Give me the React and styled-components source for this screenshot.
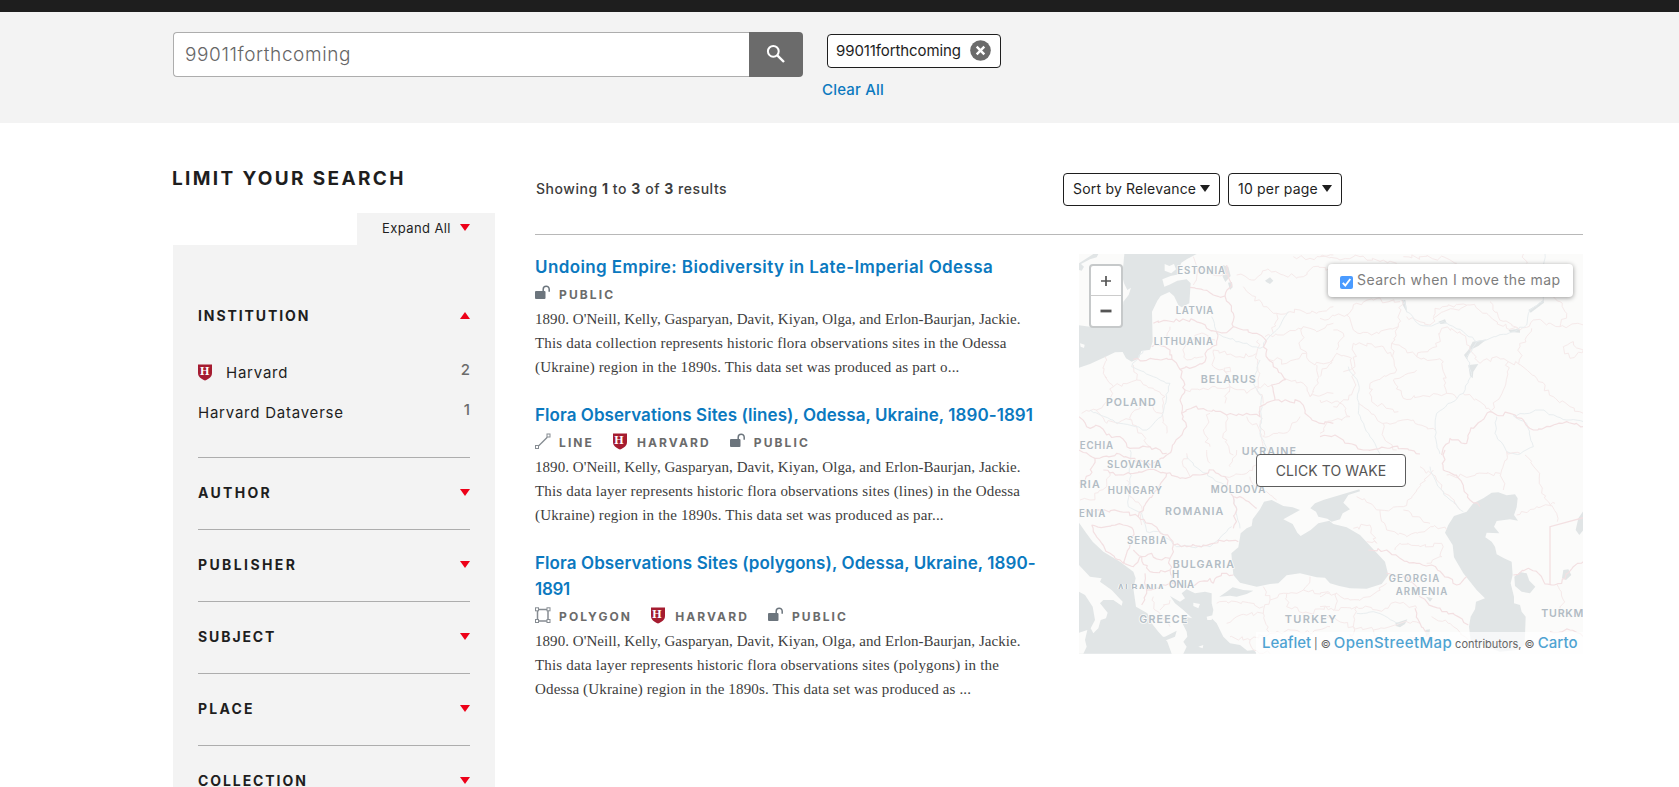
import React from 'react';
import styled, { createGlobalStyle } from 'styled-components';

const SANS = 'Inter, "Liberation Sans", sans-serif';
const SERIF = '"Liberation Serif", serif';

const GlobalStyle = createGlobalStyle`
  * { box-sizing: border-box; }
  body { margin: 0; background: #fff; font-family: ${SANS}; color: #1e1e1e; overflow: hidden; }
  a { text-decoration: none; color: #0b79bf; }
`;

const Page = styled.div`height: 787px; overflow: hidden;`;
const TopBar = styled.div`height: 12px; background: #1e1e1e;`;

/* Search header */
const Header = styled.header`
  display: flex;
  align-items: flex-start;
  gap: 20px;
  height: 111px;
  padding: 20px 0 0 173px;
  background: #f3f3f3;
`;
const SearchForm = styled.div`display: flex; width: 630px; height: 45px;`;
const SearchField = styled.div`
  flex: 1;
  border: 1px solid #adadad;
  border-right: 0;
  border-radius: 4px 0 0 4px;
  background: #fff;
  padding-left: 11px;
  font-size: 19px;
  font-weight: 300;
  line-height: 43px;
  letter-spacing: 0.6px;
  color: #666;
`;
const SearchButton = styled.button`
  display: flex;
  align-items: center;
  justify-content: center;
  width: 54px;
  padding: 0 0 2px;
  border: 0;
  border-radius: 0 4px 4px 0;
  background: #6b6b6b;
`;
const Filters = styled.div`display: flex; flex-direction: column; align-items: flex-start; gap: 12px; padding-top: 2px;`;
const Chip = styled.div`
  display: flex;
  align-items: center;
  justify-content: space-between;
  width: 174px;
  height: 34px;
  margin-left: 4px;
  padding: 0 9px 2px 8px;
  border: 1px solid #1e1e1e;
  border-radius: 4px;
  background: #fff;
  font-size: 15px;
  letter-spacing: -0.1px;
`;
const ClearLink = styled.a`margin-left: -1px; font-size: 15px; font-weight: 500; line-height: 20px; letter-spacing: 0.2px;`;

/* Columns */
const Main = styled.main`display: flex; gap: 40px; padding-left: 173px;`;
const Sidebar = styled.aside`display: flex; flex-direction: column; width: 322px; padding-top: 44px;`;
const SidebarTitle = styled.h2`
  margin: 0 0 22px -1px;
  font-size: 19px;
  font-weight: 700;
  line-height: 24px;
  letter-spacing: 2.35px;
`;
const ExpandAll = styled.button`
  display: flex;
  align-items: center;
  justify-content: space-between;
  align-self: flex-end;
  width: 138px;
  height: 32px;
  padding: 0 25px 2px;
  border: 0;
  background: #f3f3f3;
  font: 400 13px ${SANS};
  letter-spacing: 0.4px;
  color: #1e1e1e;
`;
const FacetPanel = styled.div`height: 560px; padding: 36px 25px 0; background: #f3f3f3;`;
const Facet = styled.section`padding: 25px 0 26px; border-bottom: 1px solid #adadad;`;
const FacetHeading = styled.h3`
  display: flex;
  align-items: center;
  justify-content: space-between;
  height: 20px;
  margin: 0;
  font-size: 14px;
  font-weight: 700;
  line-height: 20px;
  letter-spacing: ${(p) => p.$track}px;
`;
const Triangle = styled.i`
  margin-bottom: 1px;
  border: 5px solid transparent;
  ${(p) => (p.$up
    ? 'border-top: 0; border-bottom: 7px solid #ed0018;'
    : 'border-bottom: 0; border-top: 7px solid #ed0018;')}
`;
const FacetValues = styled.ul`
  display: flex;
  flex-direction: column;
  gap: 20px;
  margin: 0;
  padding: 37px 0 8px;
  list-style: none;
`;
const FacetValue = styled.li`
  display: flex;
  align-items: center;
  height: 20px;
  font-size: 15px;
  line-height: 20px;
  letter-spacing: 0.77px;
  svg { margin: 0 14px 2px 0; }
`;
const Count = styled.span`margin-left: auto; padding-bottom: 6px; font-weight: 500; letter-spacing: 0; color: #6b6b6b;`;

/* Results */
const Content = styled.div`width: 1048px;`;
const Toolbar = styled.div`
  display: flex;
  align-items: flex-start;
  gap: 8px;
  height: 112px;
  padding-top: 50px;
  border-bottom: 1px solid #b8b8b8;
  font-size: 14px;
`;
const Showing = styled.div`
  width: 520px;
  padding-left: 1px;
  font-weight: 500;
  line-height: 31px;
  letter-spacing: 0.54px;
  color: #3d3d3d;
  b { font-weight: 700; }
`;
const Select = styled.button`
  display: flex;
  align-items: center;
  justify-content: space-between;
  width: ${(p) => p.$width}px;
  height: 33px;
  padding: 0 9px 2px;
  border: 1px solid #1e1e1e;
  border-radius: 4px;
  background: #fff;
  font: 400 14px ${SANS};
  letter-spacing: 0.2px;
  color: #1e1e1e;
`;
const Caret = styled.i`border: 5px solid transparent; border-top: 7px solid #1e1e1e; border-bottom: 0;`;
const Body = styled.div`display: flex; justify-content: space-between; padding-top: 19px;`;
const Results = styled.div`display: flex; flex-direction: column; gap: 23px; width: 510px;`;
const Title = styled.h3`margin: 0; font-size: 17px; font-weight: 600; line-height: 26px;`;
const TitleLine = styled.a`display: block; white-space: nowrap; letter-spacing: ${(p) => p.$track}px;`;
const Meta = styled.div`display: flex; gap: 19px; height: 27px; padding-top: 5px;`;
const MetaItem = styled.span`
  display: flex;
  font-size: 12px;
  font-weight: 700;
  line-height: 19px;
  letter-spacing: 2.1px;
  color: #6b6b6b;
  svg { margin-right: ${(p) => p.$gap || 8}px; }
`;
const Label = styled.span`display: block;`;
const Abstract = styled.p`margin: 0; font: 15px/24px ${SERIF}; color: #3d3d3d;`;
const Line = styled.span`display: block; white-space: nowrap; letter-spacing: ${(p) => p.$track}px;`;

/* Map */
const MapBox = styled.div`position: relative; width: 504px; height: 400px; overflow: hidden; background: #fbfbfa;`;
const MapSvg = styled.svg`display: block; width: 504px; height: 400px;`;
const ZoomControl = styled.div`
  position: absolute;
  top: 10px;
  left: 10px;
  width: 34px;
  border: 2px solid #c6c9ca;
  border-radius: 4px;
  background: #fff;
`;
const ZoomButton = styled.div`
  display: flex;
  align-items: center;
  justify-content: center;
  height: 29px;
  & + & { height: 31px; padding-bottom: 1px; border-top: 1px solid #ccc; }
`;
const MoveToggle = styled.label`
  position: absolute;
  top: 10px;
  right: 10px;
  display: flex;
  align-items: center;
  width: 245px;
  height: 33px;
  padding: 0 0 2px 12px;
  border-radius: 4px;
  background: #fff;
  box-shadow: 0 1px 5px rgba(0, 0, 0, 0.4);
  font-size: 14px;
  letter-spacing: 0.45px;
  color: #7d7d7d;
`;
const CheckMark = styled.svg`margin: 6px 4px 0 0; flex: none;`;
const Wake = styled.div`
  position: absolute;
  top: 200px;
  left: 177px;
  width: 150px;
  height: 33px;
  border: 1px solid #5c5c5c;
  border-radius: 4px;
  background: #fff;
  font-size: 14px;
  line-height: 31px;
  letter-spacing: 0.1px;
  text-align: center;
  color: #555;
`;
const Attribution = styled.div`
  position: absolute;
  right: 0;
  bottom: 0;
  display: flex;
  align-items: baseline;
  gap: 3px;
  width: 327px;
  height: 22px;
  padding-left: 6px;
  background: rgba(255, 255, 255, 0.7);
  font-size: 11px;
  line-height: 22px;
  white-space: nowrap;
  color: #666;
`;
const Credit = styled.a`
  font-size: 15px;
  font-weight: 500;
  letter-spacing: ${(p) => p.$track}px;
  color: #4fa3d2;
`;

function Shield() {
  return (
    <svg width="14" height="17" viewBox="0 0 14 17">
      <path d="M0 .5h14v8.500c0 4-3.500 6-7 7.500C3.500 15 0 13 0 9z" fill="#a51c30" />
      <text x="7" y="11" textAnchor="middle" fontFamily="Liberation Serif, serif" fontWeight="700" fontSize="12" fill="#fff">H</text>
    </svg>
  );
}
function Lock() {
  return (
    <svg width="16" height="16" viewBox="0 0 16 16">
      <rect x="0" y="6" width="10.500" height="8" rx="1" fill="#6c757d" />
      <path d="M8.200 6.500V4.200a3 3 0 0 1 6 0V6.800" fill="none" stroke="#6c757d" strokeWidth="1.500" />
    </svg>
  );
}
function LineIcon() {
  return (
    <svg width="16" height="17" viewBox="0 0 16 17" fill="none" stroke="#868c92">
      <path d="M3.500 13L12.300 4.200" strokeWidth="1.300" />
      <rect x=".5" y="12.500" width="3" height="3" />
      <rect x="12" y="1" width="3" height="3" />
    </svg>
  );
}
function PolygonIcon() {
  return (
    <svg width="16" height="17" viewBox="0 0 16 17" fill="#fff" stroke="#868c92">
      <path d="M2.500 2.500h10.500v11.500H2.500z" strokeWidth="1.500" />
      <rect x=".5" y=".8" width="3" height="3" />
      <rect x="12" y=".8" width="3" height="3" />
      <rect x=".5" y="12.500" width="3" height="3" />
      <rect x="12" y="12.500" width="3" height="3" />
    </svg>
  );
}

const META = {
  line: { label: 'LINE', icon: <LineIcon /> },
  polygon: { label: 'POLYGON', icon: <PolygonIcon /> },
  harvard: { label: 'HARVARD', icon: <Shield />, gap: 10 },
  public: { label: 'PUBLIC', icon: <Lock /> },
};

const CITATION = ["1890. O'Neill, Kelly, Gasparyan, Davit, Kiyan, Olga, and Erlon-Baurjan, Jackie.", 0.05];
const RESULTS = [
  {
    title: [['Undoing Empire: Biodiversity in Late-Imperial Odessa', 0.4]],
    meta: ['public'],
    text: [
      CITATION,
      ['This data collection represents historic flora observations sites in the Odessa', 0.17],
      ['(Ukraine) region in the 1890s. This data set was produced as part o...', 0.165],
    ],
  },
  {
    title: [['Flora Observations Sites (lines), Odessa, Ukraine, 1890-1891', 0.06]],
    meta: ['line', 'harvard', 'public'],
    text: [
      CITATION,
      ['This data layer represents historic flora observations sites (lines) in the Odessa', 0.171],
      ['(Ukraine) region in the 1890s. This data set was produced as par...', 0.18],
    ],
  },
  {
    title: [['Flora Observations Sites (polygons), Odessa, Ukraine, 1890-', 0.09], ['1891', -0.3]],
    meta: ['polygon', 'harvard', 'public'],
    text: [
      CITATION,
      ['This data layer represents historic flora observations sites (polygons) in the', 0.17],
      ['Odessa (Ukraine) region in the 1890s. This data set was produced as ...', 0.15],
    ],
  },
];

const CLOSED_FACETS = [['AUTHOR', 2.3], ['PUBLISHER', 2.4], ['SUBJECT', 1.9], ['PLACE', 2.2], ['COLLECTION', 1.92]];

/* Turns a coarse list of points into an irregular boundary line. */
function rough(points, amount) {
  let seed = Math.round(points[0] * 7 + points[1] * 13 + points.length) || 1;
  const rnd = () => {
    seed = (seed * 16807) % 2147483647;
    return (seed % 1000) / 1000 - 0.5;
  };
  let d = `M${points[0]} ${points[1]}`;
  for (let i = 2; i < points.length; i += 2) {
    const [x0, y0, x1, y1] = [points[i - 2], points[i - 1], points[i], points[i + 1]];
    const n = Math.max(1, Math.round(Math.hypot(x1 - x0, y1 - y0) / 11));
    for (let k = 1; k < n; k += 1) {
      d += `L${(x0 + ((x1 - x0) * k) / n + rnd() * amount).toFixed(1)} ${(y0 + ((y1 - y0) * k) / n + rnd() * amount).toFixed(1)}`;
    }
    d += `L${x1} ${y1}`;
  }
  return d;
}

const NW = {
  borders: [
    [250, 220, 290, 212, 375, 212, 410, 235, 440, 245, 470, 248, 490, 230, 520, 240, 560, 250, 583, 265, 588, 310, 610, 350, 648, 388, 605, 405, 615, 450, 690, 455, 705, 490, 740, 515, 790, 520],
    [360, 112, 400, 120, 430, 135, 465, 138, 478, 160, 490, 190, 490, 230],
    [245, 290, 275, 288, 300, 300, 306, 328, 190, 328], [306, 328, 330, 358, 375, 350, 405, 335, 412, 300, 440, 285, 440, 245],
    [330, 358, 345, 420, 330, 450, 335, 490, 350, 530, 330, 560, 305, 600, 290, 615], [335, 490, 370, 472, 430, 480, 470, 495, 530, 490, 570, 500, 570, 470, 615, 450],
    [27, 500, 50, 530, 90, 530, 110, 555, 150, 560, 180, 595, 240, 590, 290, 610],
    [470, 45, 475, 75, 485, 105, 465, 138],
  ],
  minor: [
    [105, 320, 100, 370, 130, 410, 115, 450, 80, 480, 35, 490], [190, 345, 200, 390, 250, 415, 285, 440, 275, 490, 290, 550], [130, 410, 185, 395, 200, 390],
    [185, 490, 230, 460, 275, 490], [80, 480, 110, 520, 185, 510, 185, 490], [185, 510, 215, 550, 240, 590], [300, 230, 290, 260, 340, 280, 400, 250, 435, 270],
    [340, 280, 350, 330, 400, 320], [430, 300, 430, 350, 470, 370, 480, 410, 465, 460], [430, 300, 510, 320, 560, 310, 565, 270], [345, 420, 400, 415, 480, 410, 530, 430, 560, 410, 605, 405],
    [560, 310, 570, 370, 560, 420, 580, 460], [500, 75, 545, 90, 590, 60, 640, 75, 700, 80, 730, 50, 790, 60], [520, 110, 580, 170, 620, 190, 690, 180, 740, 190, 790, 170],
    [585, 260, 640, 255, 700, 230, 740, 245, 790, 220], [590, 320, 650, 340, 710, 310, 735, 345, 790, 330], [650, 388, 700, 400, 720, 440, 790, 430], [570, 500, 580, 560, 640, 550, 690, 500],
    [420, 490, 400, 540, 420, 590], [470, 495, 460, 550, 490, 615], [530, 500, 570, 545, 575, 610], [620, 190, 610, 250], [370, 20, 380, 55, 430, 75, 475, 75], [380, 55, 370, 105],
    [670, 20, 720, 25, 790, 15], [700, 230, 690, 290, 710, 310], [740, 345, 745, 400, 720, 440],
    [462, 355, 480, 352, 482, 365, 465, 366, 462, 355],
  ],
  rivers: [[425, 200, 440, 250, 520, 280, 570, 295, 620, 240, 655, 185], [570, 330, 550, 400, 575, 440, 570, 550, 600, 610], [220, 300, 185, 350, 250, 380, 300, 400, 275, 500, 230, 540, 150, 520, 60, 480]],
};
const NE = {
  borders: [[0, 560, 45, 555, 85, 580, 130, 600, 220, 590, 300, 612], [365, 615, 390, 565, 440, 580, 450, 545, 510, 485, 530, 495, 570, 490, 605, 505, 640, 540, 690, 530, 740, 515, 790, 530]],
  minor: [
    [0, 205, 80, 195, 110, 160, 160, 150, 240, 155], [80, 195, 100, 240, 155, 255, 235, 230, 245, 150], [235, 230, 215, 280, 230, 360, 150, 400, 155, 455, 235, 485],
    [100, 280, 190, 290, 215, 320], [100, 280, 105, 350, 70, 365], [0, 380, 50, 310, 95, 325, 105, 400, 85, 450, 40, 470], [40, 240, 70, 250, 50, 300], [260, 200, 330, 225, 370, 185, 450, 165, 500, 190, 560, 235, 600, 240],
    [215, 280, 290, 320, 350, 290, 365, 235, 420, 245, 450, 300], [290, 320, 370, 335, 380, 430, 300, 440, 250, 445, 220, 390, 290, 360], [450, 300, 480, 340, 530, 320, 565, 335, 600, 345, 650, 385, 700, 440, 750, 470, 790, 490],
    [565, 335, 550, 420, 515, 480], [430, 430, 480, 455, 515, 485], [510, 155, 535, 200, 600, 240, 640, 210, 720, 230, 790, 225], [600, 290, 635, 235], [600, 290, 600, 345], [730, 290, 750, 325, 790, 300, 760, 275, 730, 290],
    [0, 450, 60, 460, 90, 500, 20, 520, 0, 550], [115, 460, 190, 520, 195, 570, 230, 600], [190, 520, 280, 510, 345, 540], [380, 430, 410, 445], [0, 20, 60, 30, 120, 20, 230, 40], [250, 20, 380, 25, 410, 40], [610, 12, 620, 40], [700, 140, 740, 190, 720, 230], [340, 200, 345, 175, 440, 165],
  ],
  rivers: [
    [250, 150, 260, 185, 300, 225, 335, 228, 370, 215, 430, 245, 470, 275, 510, 265, 580, 245, 620, 225, 630, 180, 670, 155, 675, 12], [470, 275, 440, 320, 455, 370, 430, 430, 350, 490, 345, 560, 360, 612],
    [530, 500, 525, 550, 560, 605, 600, 612, 640, 590, 620, 520, 580, 497, 660, 480, 740, 510, 790, 515], [85, 350, 115, 400, 115, 490, 150, 560, 180, 612],
  ],
};
const SW = {
  borders: [
    [27, 0, 75, 25, 100, 20, 140, 10, 180, 25, 240, 45, 290, 15], [75, 25, 60, 75, 30, 100], [100, 60, 160, 75, 230, 60, 290, 70], [290, 70, 260, 120, 225, 165, 205, 200, 250, 225, 300, 265, 310, 285],
    [290, 70, 330, 85, 390, 75, 430, 60, 465, 80, 490, 140, 500, 180, 490, 235], [490, 140, 520, 145, 560, 175], [310, 285, 350, 290, 400, 285, 430, 280, 470, 270, 505, 275],
    [65, 225, 110, 230, 160, 225, 190, 240, 180, 285, 160, 340, 120, 310, 70, 245, 65, 225], [205, 200, 150, 185, 90, 180, 30, 190], [190, 300, 215, 320, 245, 310, 275, 330, 300, 325, 310, 285], [215, 320, 190, 350, 160, 335],
    [215, 320, 240, 365, 300, 360, 300, 325], [300, 360, 310, 400, 350, 410, 420, 385, 430, 400], [430, 400, 455, 370, 490, 375], [225, 370, 230, 430, 215, 465], [230, 420, 310, 400],
  ],
  minor: [
    [120, 70, 110, 110, 60, 150, 30, 150], [170, 90, 180, 140, 215, 170, 215, 225], [250, 440, 255, 480, 300, 530], [300, 450, 270, 480], [580, 0, 570, 40, 530, 70, 465, 80], [640, 30, 700, 60, 740, 40, 780, 50], [540, 80, 555, 110, 590, 125, 620, 150],
    [580, 410, 600, 450, 580, 490, 500, 500, 470, 520], [600, 450, 650, 430, 700, 420, 720, 380], [650, 430, 650, 470, 720, 490, 780, 470], [700, 420, 780, 430], [580, 490, 600, 550, 540, 570, 480, 560], [600, 550, 660, 540, 720, 550, 780, 530],
    [440, 460, 500, 455, 580, 470], [540, 570, 550, 600, 600, 611], [350, 10, 340, 50, 360, 80], [410, 0, 420, 40], [500, 0, 480, 50],
  ],
  rivers: [[180, 0, 180, 100, 175, 170, 215, 190, 230, 245, 270, 245, 320, 290, 420, 290, 470, 245, 485, 230], [350, 20, 390, 60, 480, 120, 500, 180, 510, 235]],
};
const SE = {
  borders: [
    [375, 0, 370, 60, 410, 75, 430, 110, 450, 150, 480, 170], [145, 300, 200, 300, 240, 325, 290, 340, 335, 345, 370, 375, 410, 405, 440, 380], [200, 370, 250, 380, 290, 410, 300, 440, 340, 470, 400, 490, 445, 525],
    [580, 375, 625, 355, 655, 370, 675, 402, 725, 400, 760, 350, 790, 335], [285, 475, 300, 520, 330, 560, 380, 600], [690, 545, 750, 540, 790, 560],
  ],
  minor: [
    [300, 50, 350, 90, 390, 140, 420, 180], [380, 75, 450, 80, 540, 70], [600, 10, 560, 5, 545, 60, 550, 120], [615, 15, 650, 60, 665, 130, 710, 190, 712, 215], [590, 195, 650, 170, 705, 160],
    [180, 180, 250, 170, 290, 120, 340, 60], [180, 180, 200, 240, 260, 260, 340, 230, 380, 240], [250, 180, 330, 220], [100, 235, 150, 225, 170, 280, 140, 275], [225, 300, 240, 280, 300, 290, 365, 280, 365, 320, 320, 340], [110, 140, 150, 160, 180, 180],
    [0, 440, 50, 430, 90, 450, 150, 440, 200, 400], [50, 430, 40, 480, 110, 470, 170, 480, 240, 460, 290, 475], [110, 470, 100, 530, 160, 540, 240, 520, 300, 520], [20, 500, 100, 530, 90, 590], [160, 540, 180, 590, 260, 570, 330, 560], [710, 402, 730, 450, 720, 500, 790, 490], [335, 500, 400, 530, 445, 570], [0, 470, 40, 480],
  ],
  rivers: [[330, 50, 350, 100, 380, 140, 430, 185], [110, 490, 160, 485, 240, 520]],
};
const QUADRANTS = [[NW, -27, -12], [NE, 723, -12], [SW, -27, 588], [SE, 723, 588]];

/* text, x, baseline, width, size in map units */
const LABELS = [
  ['ESTONIA', 295, 60, 143, 28], ['LATVIA', 290, 181, 113, 28], ['LITHUANIA', 224, 273, 178, 28], ['BELARUS', 365, 388, 165, 31], ['POLAND', 81, 456, 149, 31],
  ['ECHIA', 2, 586, 100, 28], ['UKRAINE', 488, 602, 163, 31], ['SLOVAKIA', 84, 641, 163, 28], ['RIA', 2, 702, 60, 31], ['HUNGARY', 86, 721, 163, 28], ['MOLDOVA', 395, 716, 164, 28],
  ['ENIA', 0, 789, 79, 28], ['ROMANIA', 258, 783, 175, 31], ['SERBIA', 144, 869, 119, 28], ['BULGARIA', 281, 943, 184, 31], ['H', 279, 972, 22, 28], ['ONIA', 270, 1002, 75, 28],
  ['GREECE', 181, 1107, 144, 31], ['TURKEY', 617, 1107, 154, 32], ['GEORGIA', 929, 984, 152, 28], ['ARMENIA', 950, 1024, 155, 28], ['TURKM', 1387, 1088, 126, 31],
];
const LAND = '#fbfbfa';
const WATER = '#e1e5e6';

function MapDrawing() {
  return (
    <MapSvg viewBox="0 0 1512 1200">
      <g fill={WATER} transform="translate(-27 -12)">
        <path d="M163 12L160 45L156 75L162 100L172 120L183 113L176 135L160 155L158 180L140 185L125 205L100 228L60 230L27 226V353L60 342L104 322L135 307L158 306L168 325L185 335L207 325L214 303L240 299L248 275L246 185L262 152L272 138L298 126L312 138L325 165L335 172L358 160L362 100L350 88L322 92L298 104L283 110L277 88L302 78L330 72L328 52L334 38L350 28L380 12Z" />
        <path d="M27 60L35 62L42 50L33 42L60 28L80 22L85 12L70 12L55 22L27 40ZM458 45L475 50L482 78L466 96L458 80ZM474 98L486 96L488 112L480 120ZM585 92L600 82L610 92L600 102L590 97Z" />
        <path d="M284 42L298 48L312 42L318 58L304 70L284 62ZM30 280L44 284L42 294L32 290Z" fill={LAND} />
      </g>
      <g fill={WATER} transform="translate(-27 588)">
        <path d="M570 178L582 155L605 150L640 168L668 172L690 180L640 208L668 222L682 248L692 258L722 240L745 220L778 212L790 222L830 232L870 255L912 300L945 335L955 375L935 402L890 416L840 415L808 408L780 400L765 383L740 382L690 370L650 376L625 400L600 402L560 410L510 398L490 375L484 310L505 292L512 250L530 235L545 228L548 208Z" />
        <path d="M721 175L735 160L762 149L810 135L868 118L870 124L835 135L820 158L840 178L818 190L810 208L785 215L772 206L745 200L738 185Z" />
        <path d="M27 218L48 248L68 275L100 305L150 335L190 365L197 385L190 415L198 470L232 490L245 520L265 545L292 575L305 611H27Z" />
        <path d="M300 438L315 460L340 480L367 505L345 500L335 515L350 545L352 560L340 575L350 590L340 611H560L552 600L532 602L510 585L480 580L460 560L450 540L440 520L425 505L430 480L425 460L425 430L405 425L375 430L350 418L335 430L345 445L330 455Z" />
        <path d="M448 440L470 425L488 412L520 420L550 422L530 432L500 440L480 437ZM260 562L285 560L320 542L315 560L290 570L265 575Z" />
        <g fill={LAND}>
          <path d="M27 345L60 380L95 385L90 395L125 420L158 455L155 467L130 450L100 450L90 460L113 488L108 505L92 510L85 535L70 550L62 535L75 510L68 470L45 435L27 425Z" />
          <path d="M27 548L52 540L45 570L50 590L40 611H27ZM370 458L390 462L385 475L370 468ZM410 500L428 496L425 510L412 510ZM385 590L400 585L398 595Z" />
        </g>
      </g>
      <g fill={WATER} transform="translate(723 588)">
        <path d="M375 248L385 225L402 198L440 185L460 160L490 145L515 128L535 127L560 136L585 133L593 145L590 172L582 195L594 212L570 208L530 213L522 230L538 250L500 248L496 262L515 275L525 290L530 313L552 325L575 335L578 375L572 400L582 440L582 460L600 465L605 485L617 500L614 585L590 600L540 605L500 590L452 572L447 530L452 500L465 478L468 455L495 445L470 420L430 370L402 322L398 285Z" />
        <path d="M583 380L600 366L620 370L628 392L646 410L630 430L605 425L585 408ZM790 183L775 205L767 240L778 255L790 240ZM730 360L745 358L754 375L738 390L726 384ZM226 520L262 508L255 522L240 532L228 528ZM318 440L338 445L330 455ZM316 540L330 538L328 552L318 560Z" />
      </g>
      <g fill={WATER} transform="translate(723 -12)">
        <path d="M246 150L256 150L262 190L248 165ZM355 215L375 208L380 220L362 222ZM458 275L500 268L475 288L455 298L440 328L432 315L445 300ZM565 240L600 236L600 248L570 246ZM445 345L475 342L460 365L458 385L450 378ZM625 180L650 165L670 150L672 158L632 188Z" />
      </g>
      {QUADRANTS.map(([q, x, y]) => (
        <g key={`${x},${y}`} transform={`translate(${x} ${y})`} fill="none" strokeLinejoin="round">
          {q.minor.map((p, i) => <path key={i} d={rough(p, 14)} stroke="#f6eaea" strokeWidth="3" />)}
          {q.rivers.map((p, i) => <path key={i} d={rough(p, 7)} stroke="#e9eef0" strokeWidth="3" />)}
          {q.borders.map((p, i) => <path key={i} d={rough(p, 11)} stroke="#f3e0e2" strokeWidth="3.600" />)}
        </g>
      ))}
      <path d="M1513 791L1413 818V990" fill="none" stroke="#f3e0e2" strokeWidth="4" />
      <g fontFamily={SANS} fontWeight="600" fill="#b2bcc4" stroke={LAND} strokeWidth="5" strokeLinejoin="round" style={{ paintOrder: 'stroke' }}>
        {LABELS.map(([t, x, y, w, s]) => (
          <text key={t + x} x={x} y={y} fontSize={s + 1} textLength={w}>{t}</text>
        ))}
        <svg x="110" y="990" width="160" height="15" viewBox="110 990 160 15">
          <text x="115" y="1013" fontSize="29" textLength="141">ALBANIA</text>
        </svg>
      </g>
    </MapSvg>
  );
}

export default function App() {
  return (
    <Page>
      <GlobalStyle />
      <TopBar />
      <Header>
        <SearchForm>
          <SearchField>99011forthcoming</SearchField>
          <SearchButton aria-label="Search">
            <svg width="20" height="20" viewBox="0 0 20 20" fill="none" stroke="#fff" strokeWidth="2">
              <circle cx="7.300" cy="7.300" r="5.400" />
              <path d="M11.300 11.300L18 18" strokeWidth="2.400" />
            </svg>
          </SearchButton>
        </SearchForm>
        <Filters>
          <Chip>
            99011forthcoming
            <svg width="21" height="21" viewBox="0 0 21 21">
              <circle cx="10.500" cy="10.500" r="10.300" fill="#6b6b6b" />
              <path d="M6.700 6.700l7.600 7.600M14.300 6.700l-7.600 7.600" stroke="#fff" strokeWidth="2.400" />
            </svg>
          </Chip>
          <ClearLink>Clear All</ClearLink>
        </Filters>
      </Header>
      <Main>
        <Sidebar>
          <SidebarTitle>LIMIT YOUR SEARCH</SidebarTitle>
          <ExpandAll>Expand All<Triangle /></ExpandAll>
          <FacetPanel>
            <Facet>
              <FacetHeading $track={1.9}>INSTITUTION<Triangle $up /></FacetHeading>
              <FacetValues>
                <FacetValue><Shield />Harvard<Count>2</Count></FacetValue>
                <FacetValue>Harvard Dataverse<Count>1</Count></FacetValue>
              </FacetValues>
            </Facet>
            {CLOSED_FACETS.map(([name, track]) => (
              <Facet key={name}>
                <FacetHeading $track={track}>{name}<Triangle /></FacetHeading>
              </Facet>
            ))}
          </FacetPanel>
        </Sidebar>
        <Content>
          <Toolbar>
            <Showing>Showing <b>1</b> to <b>3</b> of <b>3</b> results</Showing>
            <Select $width={157}>Sort by Relevance<Caret /></Select>
            <Select $width={114}>10 per page<Caret /></Select>
          </Toolbar>
          <Body>
            <Results>
              {RESULTS.map((r) => (
                <article key={r.title[0][0]}>
                  <Title>{r.title.map(([t, k]) => <TitleLine key={t} $track={k}>{t}</TitleLine>)}</Title>
                  <Meta>
                    {r.meta.map((m) => (
                      <MetaItem key={m} $gap={META[m].gap}>{META[m].icon}<Label>{META[m].label}</Label></MetaItem>
                    ))}
                  </Meta>
                  <Abstract>{r.text.map(([t, k]) => <Line key={t} $track={k}>{t}</Line>)}</Abstract>
                </article>
              ))}
            </Results>
            <MapBox>
              <MapDrawing />
              <ZoomControl>
                <ZoomButton>
                  <svg width="12" height="12" viewBox="0 0 12 12"><path d="M1 6h10M6 1v10" stroke="#555" strokeWidth="1.700" /></svg>
                </ZoomButton>
                <ZoomButton>
                  <svg width="12" height="12" viewBox="0 0 12 12"><path d="M.5 6h11" stroke="#555" strokeWidth="2.800" /></svg>
                </ZoomButton>
              </ZoomControl>
              <MoveToggle>
                <CheckMark width="13" height="13" viewBox="0 0 13 13">
                  <rect width="13" height="13" rx="2" fill="#4a9bff" />
                  <path d="M2.800 6.800L5.300 9.500L10.300 3" fill="none" stroke="#fff" strokeWidth="1.900" />
                </CheckMark>
                Search when I move the map
              </MoveToggle>
              <Wake>CLICK TO WAKE</Wake>
              <Attribution>
                <Credit $track={-0.06}>Leaflet</Credit>
                <span>| ©</span>
                <Credit $track={0.4}>OpenStreetMap</Credit>
                <span>contributors, ©</span>
                <Credit $track={0.1}>Carto</Credit>
              </Attribution>
            </MapBox>
          </Body>
        </Content>
      </Main>
    </Page>
  );
}
